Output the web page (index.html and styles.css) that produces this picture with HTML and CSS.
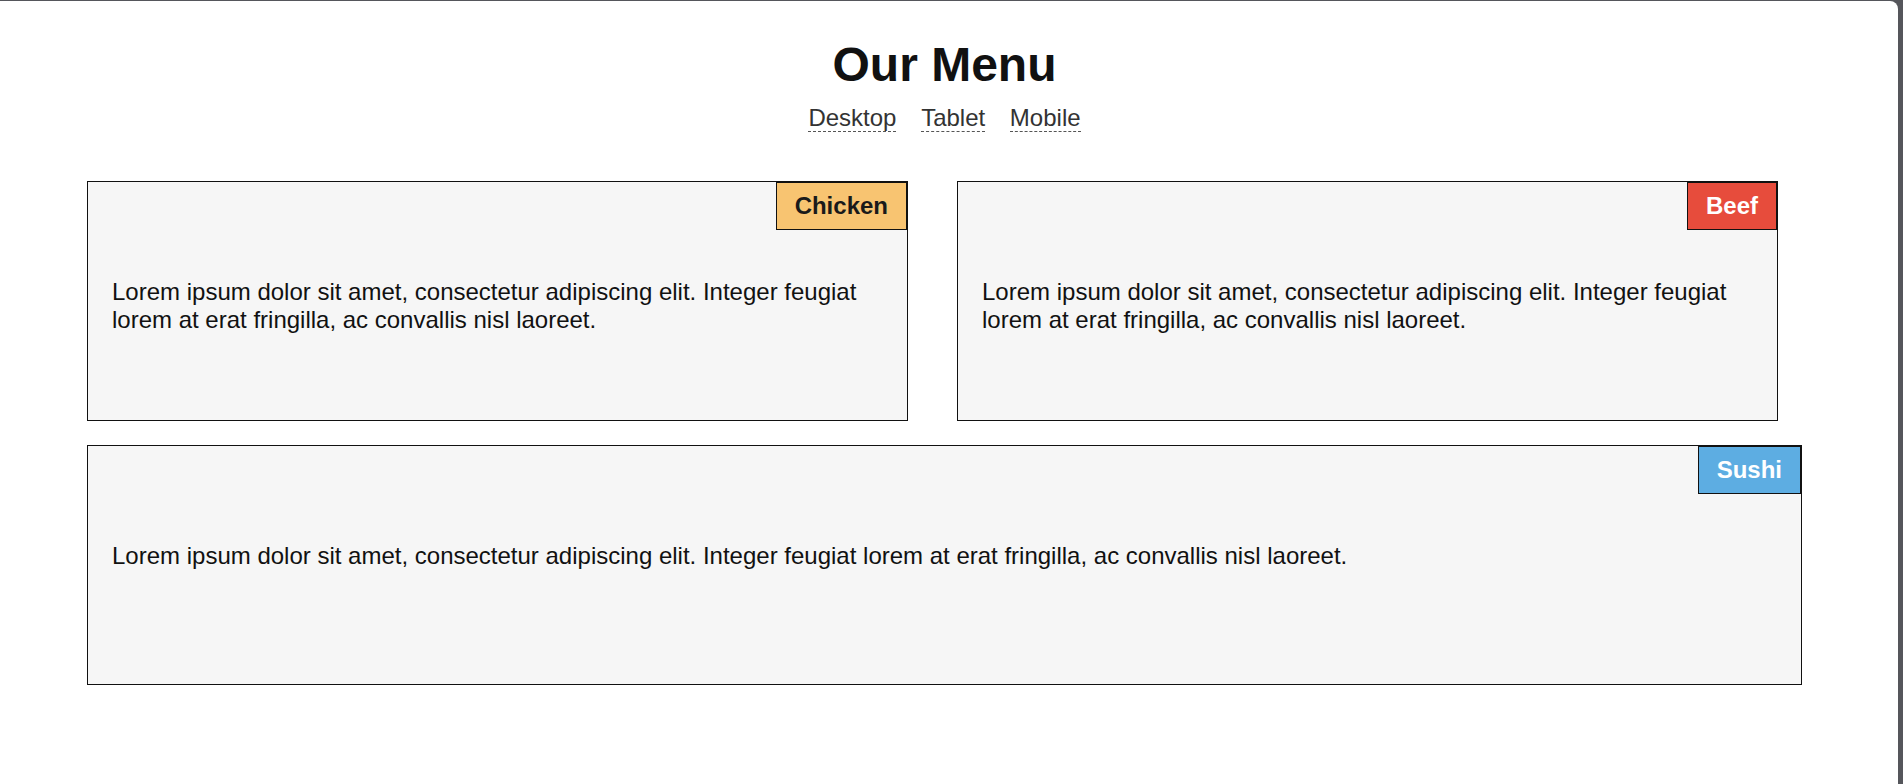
FILE: index.html
```html
<!DOCTYPE html>
<html lang="en">
<head>
<meta charset="utf-8">
<title>Our Menu</title>
<link rel="stylesheet" href="styles.css">
</head>
<body>
<div class="page">
  <div class="container">
    <header class="header">
      <h1 class="title">Our Menu</h1>
      <nav class="nav">
        <a class="nav-link" href="#">Desktop</a>
        <a class="nav-link" href="#">Tablet</a>
        <a class="nav-link" href="#">Mobile</a>
      </nav>
    </header>
    <main class="menu">
      <article class="card">
        <span class="badge badge-chicken">Chicken</span>
        <p class="card-text">Lorem ipsum dolor sit amet, consectetur adipiscing elit. Integer feugiat lorem at erat fringilla, ac convallis nisl laoreet.</p>
      </article>
      <article class="card">
        <span class="badge badge-beef">Beef</span>
        <p class="card-text">Lorem ipsum dolor sit amet, consectetur adipiscing elit. Integer feugiat lorem at erat fringilla, ac convallis nisl laoreet.</p>
      </article>
      <article class="card card-wide">
        <span class="badge badge-sushi">Sushi</span>
        <p class="card-text">Lorem ipsum dolor sit amet, consectetur adipiscing elit. Integer feugiat lorem at erat fringilla, ac convallis nisl laoreet.</p>
      </article>
    </main>
  </div>
</div>
</body>
</html>
```

FILE: styles.css
```css
html, body {
  margin: 0;
  padding: 0;
  height: 100%;
}

body {
  background: #55565b;
  font-family: "Liberation Sans", Arial, sans-serif;
  color: #111;
  overflow: hidden;
}

.page {
  background: #ffffff;
  margin: 1px 5px 0 0;
  height: 783px;
  border-top-right-radius: 8px;
  overflow: hidden;
}

.container {
  width: 1715px;
  margin-left: 87px;
}

.header {
  text-align: center;
}

.title {
  margin: 36px 0 0;
  font-size: 48px;
  font-weight: bold;
  line-height: normal;
  color: #111;
}

.nav {
  margin-top: 12px;
  font-size: 24px;
  line-height: normal;
}

.nav-link {
  color: #333;
  text-decoration: none;
  border-bottom: 1px dashed #555;
  margin: 0 9px;
}

.menu {
  display: flex;
  flex-wrap: wrap;
  gap: 24px 49px;
  margin-top: 49px;
}

.card {
  position: relative;
  box-sizing: border-box;
  width: 821px;
  height: 240px;
  border: 1px solid #111;
  background: #f6f6f6;
  padding: 96px 24px 0 24px;
}

.card-wide {
  width: 100%;
}

.card-text {
  margin: 0;
  font-size: 24px;
  line-height: normal;
  color: #111;
}

.badge {
  position: absolute;
  top: 0;
  right: 0;
  border: 1px solid #111;
  padding: 9px 18px;
  font-size: 24px;
  font-weight: bold;
  line-height: normal;
}

.badge-chicken {
  background: #f8c471;
  color: #1a1a1a;
}

.badge-beef {
  background: #e74c3c;
  color: #ffffff;
}

.badge-sushi {
  background: #5dade2;
  color: #ffffff;
}
```
